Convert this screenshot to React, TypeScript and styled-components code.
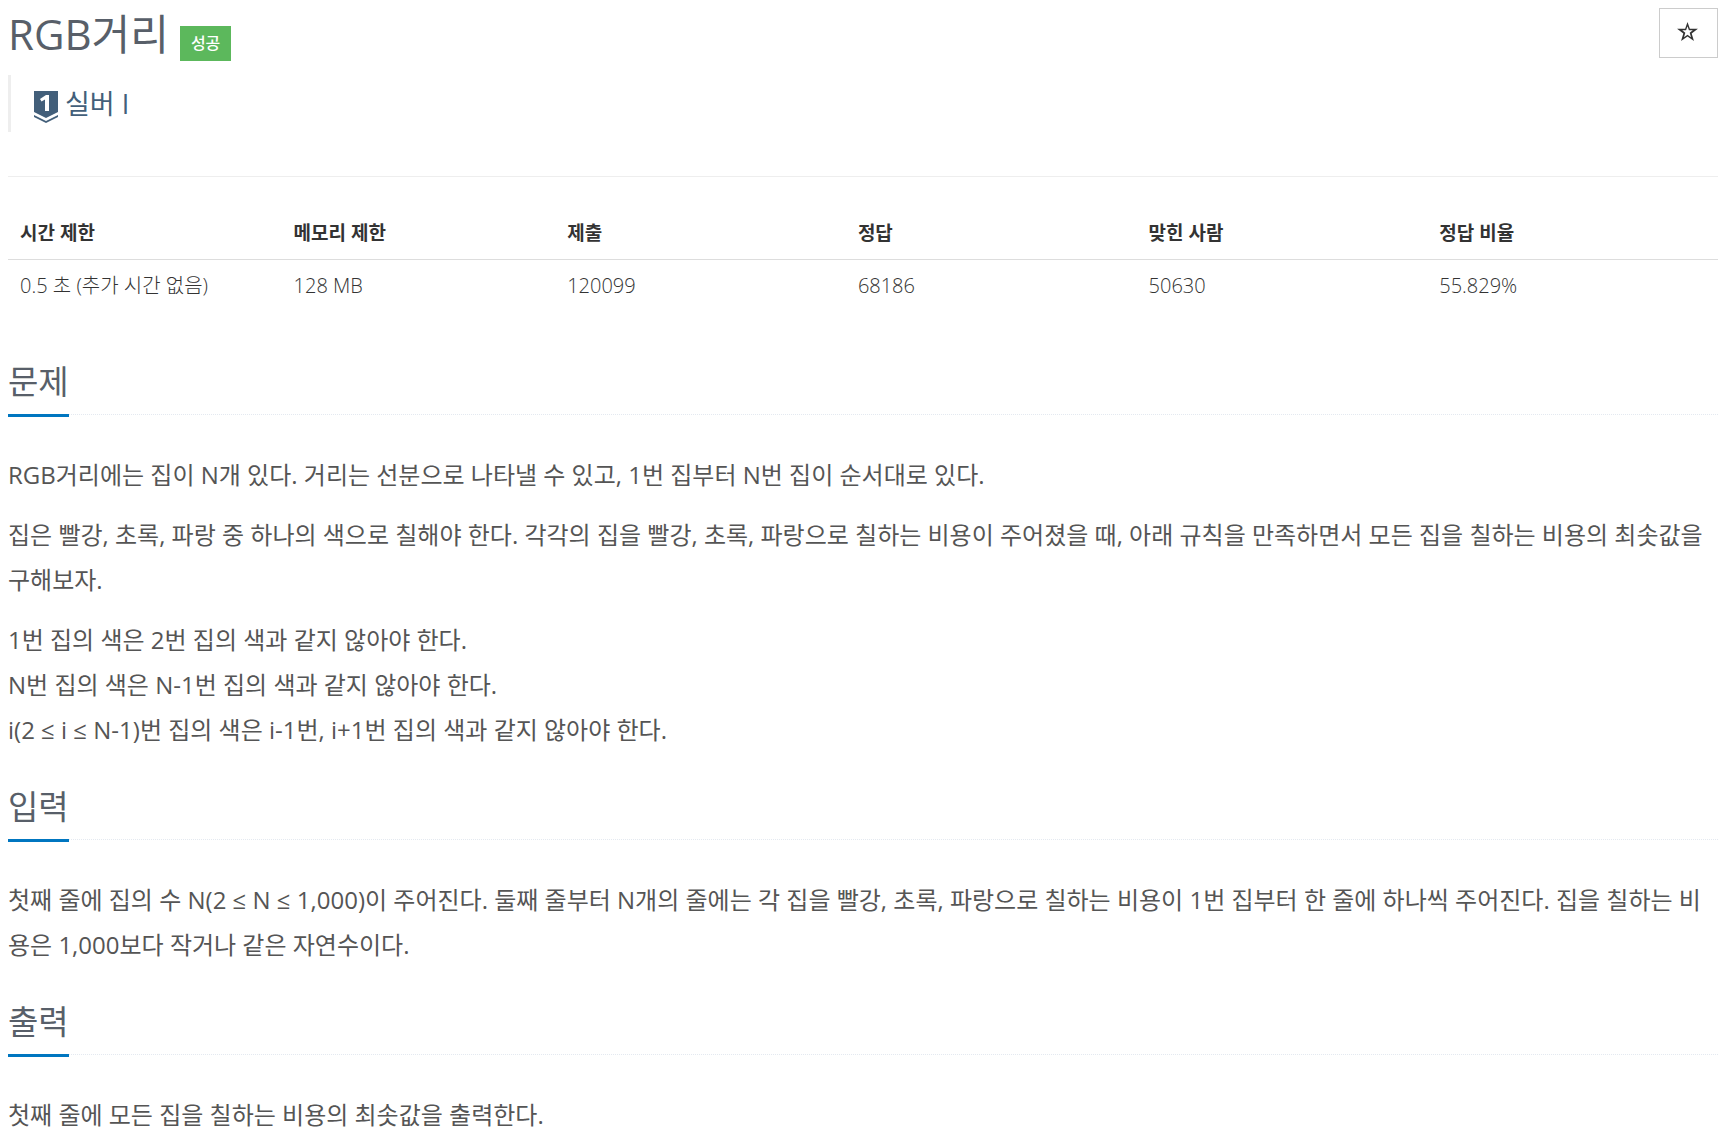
import React from "react";
import styled, { createGlobalStyle } from "styled-components";

const GlobalStyle = createGlobalStyle`
  *, *::before, *::after { box-sizing: border-box; }
  body {
    margin: 0;
    background: #fff;
    color: #333;
    font-family: "Open Sans", "Noto Sans CJK KR", sans-serif;
  }
`;

const Page = styled.main`
  padding: 8px;
`;

const TitleRow = styled.header`
  display: flex;
  justify-content: space-between;
  align-items: flex-start;
`;

const TitleGroup = styled.div`
  display: flex;
  align-items: flex-end;
  gap: 11px;
`;

const Title = styled.h1`
  margin: 0;
  padding-bottom: 2px;
  color: #585f69;
  font-size: 42px;
  font-weight: 400;
  line-height: 51px;
`;

const StatusLabel = styled.span`
  padding: 0 11px;
  background: #5cb85c;
  color: #fff;
  font-size: 16px;
  font-weight: 500;
  line-height: 35px;
`;

const StarButton = styled.button`
  display: flex;
  align-items: center;
  justify-content: center;
  width: 59px;
  height: 50px;
  padding: 0 2px 4px 0;
  border: 1px solid #ccc;
  background: #fff;
  color: #333;
  cursor: pointer;
`;

const Tier = styled.blockquote`
  display: flex;
  align-items: flex-end;
  gap: 7px;
  height: 57px;
  margin: 14px 0 44px;
  padding: 0 0 9px 23px;
  border-left: 3px solid #eee;
`;

const TierLink = styled.a`
  color: #435f7a;
  font-size: 27px;
  line-height: 39px;
  text-decoration: none;
`;

const Divider = styled.hr`
  margin: 0 0 30px;
  border: 0;
  border-top: 1px solid #eee;
`;

const InfoTable = styled.table`
  width: 100%;
  margin-bottom: 43px;
  border-collapse: collapse;
  table-layout: fixed;
  font-size: 20px;
  line-height: 28px;
  text-align: left;
`;

const HeadCell = styled.th<{ $width: string }>`
  width: ${(p) => p.$width};
  padding: 12px;
  border-bottom: 1px solid #ddd;
  font-size: 19px;
  font-weight: 700;
`;

const Cell = styled.td`
  padding: 12px;
  font-weight: 300;
`;

const Headline = styled.div`
  margin-bottom: 37px;
  border-bottom: 1px dotted #e4e9f0;
`;

const HeadlineText = styled.h2`
  display: inline-block;
  margin: 0 0 -3px;
  padding-bottom: 5px;
  border-bottom: 3px solid #0076c0;
  color: #585f69;
  font-size: 33px;
  font-weight: 400;
  line-height: 54px;
  vertical-align: top;
`;

const Section = styled.section`
  margin-bottom: 28px;
`;

const Paragraph = styled.p`
  margin: 0 0 15px;
  color: #555;
  font-size: 24px;
  line-height: 45px;
`;

const columns = [
  { label: "시간 제한", value: "0.5 초 (추가 시간 없음)", width: "16%" },
  { label: "메모리 제한", value: "128 MB", width: "16%" },
  { label: "제출", value: "120099", width: "17%" },
  { label: "정답", value: "68186", width: "17%" },
  { label: "맞힌 사람", value: "50630", width: "17%" },
  { label: "정답 비율", value: "55.829%", width: "17%" },
];

const sections: { title: string; paragraphs: string[][] }[] = [
  {
    title: "문제",
    paragraphs: [
      ["RGB거리에는 집이 N개 있다. 거리는 선분으로 나타낼 수 있고, 1번 집부터 N번 집이 순서대로 있다."],
      [
        "집은 빨강, 초록, 파랑 중 하나의 색으로 칠해야 한다. 각각의 집을 빨강, 초록, 파랑으로 칠하는 비용이 주어졌을 때, 아래 규칙을 만족하면서 모든 집을 칠하는 비용의 최솟값을 구해보자.",
      ],
      [
        "1번 집의 색은 2번 집의 색과 같지 않아야 한다.",
        "N번 집의 색은 N-1번 집의 색과 같지 않아야 한다.",
        "i(2 ≤ i ≤ N-1)번 집의 색은 i-1번, i+1번 집의 색과 같지 않아야 한다.",
      ],
    ],
  },
  {
    title: "입력",
    paragraphs: [
      [
        "첫째 줄에 집의 수 N(2 ≤ N ≤ 1,000)이 주어진다. 둘째 줄부터 N개의 줄에는 각 집을 빨강, 초록, 파랑으로 칠하는 비용이 1번 집부터 한 줄에 하나씩 주어진다. 집을 칠하는 비용은 1,000보다 작거나 같은 자연수이다.",
      ],
    ],
  },
  { title: "출력", paragraphs: [["첫째 줄에 모든 집을 칠하는 비용의 최솟값을 출력한다."]] },
];

const TierBadge = () => (
  <svg width="24" height="32" viewBox="0 0 24 32" aria-hidden="true">
    <path d="M0 0H24V21L12 27L0 21Z" fill="#435f7a" />
    <path d="M0 24L12 30L24 24V26L12 32L0 26Z" fill="#435f7a" />
    <path d="M12 4H15V20H11V8.5L7.5 10.5L6 8Z" fill="#fff" />
  </svg>
);

const Star = () => (
  <svg width="21" height="19" viewBox="0 0 22 20" aria-hidden="true">
    <path
      fill="#333"
      fillRule="evenodd"
      d="M11 0L13.5 7H22L15.4 12L17.8 20L11 15.3L4.2 20L6.6 12L0 7H8.5ZM11 4.4L9.5 8.8H5.4L8.7 11.3L7.3 16L11 13.4L14.7 16L13.3 11.3L16.6 8.8H12.5Z"
    />
  </svg>
);

export default function App() {
  return (
    <Page lang="ko">
      <GlobalStyle />
      <TitleRow>
        <TitleGroup>
          <Title>RGB거리</Title>
          <StatusLabel>성공</StatusLabel>
        </TitleGroup>
        <StarButton type="button" aria-label="즐겨찾기">
          <Star />
        </StarButton>
      </TitleRow>
      <Tier>
        <TierBadge />
        <TierLink href="#tier">실버 I</TierLink>
      </Tier>
      <Divider />
      <InfoTable>
        <thead>
          <tr>
            {columns.map((c) => (
              <HeadCell key={c.label} scope="col" $width={c.width}>
                {c.label}
              </HeadCell>
            ))}
          </tr>
        </thead>
        <tbody>
          <tr>
            {columns.map((c) => (
              <Cell key={c.label}>{c.value}</Cell>
            ))}
          </tr>
        </tbody>
      </InfoTable>
      {sections.map((s) => (
        <Section key={s.title}>
          <Headline>
            <HeadlineText>{s.title}</HeadlineText>
          </Headline>
          {s.paragraphs.map((lines) => (
            <Paragraph key={lines[0]}>
              {lines.map((line, i) => (
                <React.Fragment key={line}>
                  {i > 0 && <br />}
                  {line}
                </React.Fragment>
              ))}
            </Paragraph>
          ))}
        </Section>
      ))}
    </Page>
  );
}
